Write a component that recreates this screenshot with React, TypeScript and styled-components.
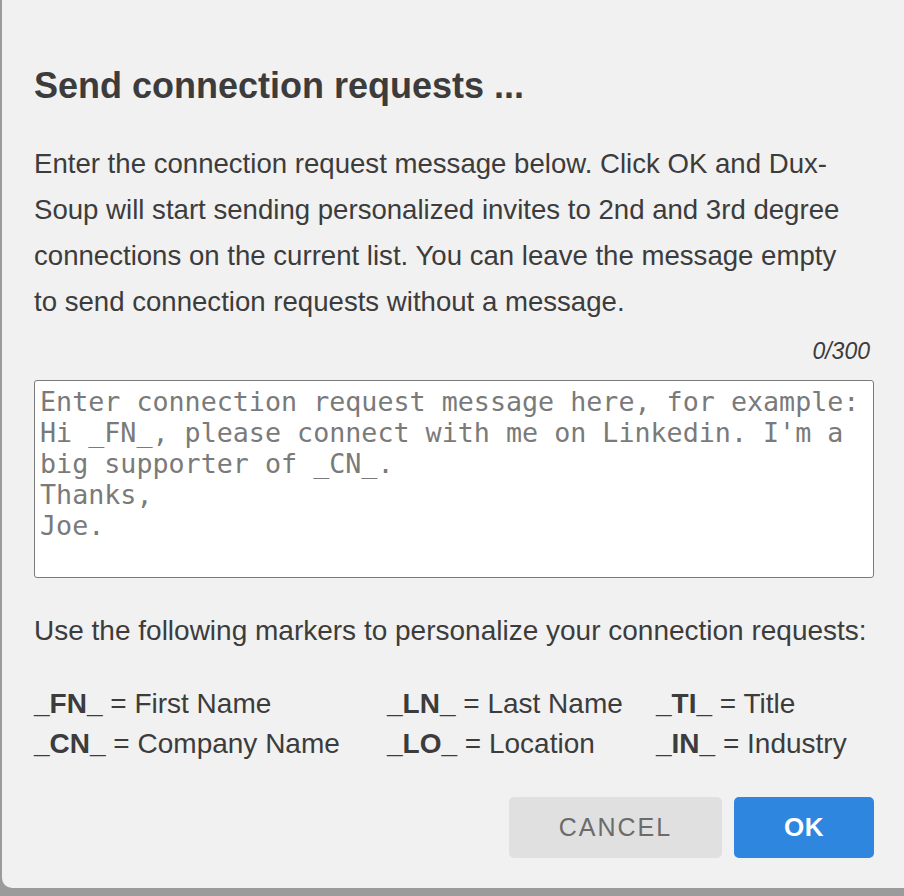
import { useState } from "react";
import styled, { createGlobalStyle } from "styled-components";

const GlobalStyle = createGlobalStyle`
  html, body {
    margin: 0;
    padding: 0;
    background: #9b9b9b;
    overflow: hidden;
  }
  body {
    font-family: "Liberation Sans", Arial, sans-serif;
  }
`;

const Backdrop = styled.div`
  width: 904px;
  height: 896px;
  padding-left: 2px;
  box-sizing: border-box;
`;

const Dialog = styled.div`
  width: 920px;
  height: 888px;
  box-sizing: border-box;
  background: #f1f1f1;
  border-radius: 0 0 10px 10px;
  padding: 66px 48px 0 32px;
  color: #3c3c3c;
`;

const Title = styled.h1`
  margin: 0;
  font-size: 36px;
  line-height: 40px;
  font-weight: 700;
`;

const Intro = styled.p`
  margin: 35px 0 0;
  width: 820px;
  font-size: 27.6px;
  line-height: 46px;
`;

const Counter = styled.div`
  margin-top: 12px;
  width: 836px;
  text-align: right;
  font-size: 23px;
  line-height: 28px;
  font-style: italic;
`;

const MessageBox = styled.textarea`
  display: block;
  margin-top: 15px;
  width: 840px;
  height: 198px;
  box-sizing: border-box;
  padding: 5px 5px;
  border: 1.5px solid #7a7a7a;
  border-radius: 3px;
  background: #fff;
  resize: none;
  font-family: "DejaVu Sans Mono", "Liberation Mono", monospace;
  font-size: 26.7px;
  line-height: 31px;
  color: #3c3c3c;
  outline: none;

  &::placeholder {
    color: #7a7a7a;
    opacity: 1;
  }
`;

const Hint = styled.p`
  margin: 37px 0 0;
  font-size: 28px;
  line-height: 32px;
  white-space: nowrap;
`;

const Markers = styled.div`
  margin-top: 37px;
  display: grid;
  grid-template-columns: 353px 269px auto;
  font-size: 28px;
  line-height: 40px;
`;

const Marker = styled.div`
  white-space: nowrap;
  b {
    font-weight: 700;
  }
`;

const Actions = styled.div`
  margin-top: 33px;
  width: 840px;
  display: flex;
  justify-content: flex-end;
  gap: 12px;
`;

const Button = styled.button<{ $primary?: boolean }>`
  height: 61px;
  width: ${(p) => (p.$primary ? "140px" : "213px")};
  border: none;
  border-radius: 5px;
  font-family: "Liberation Sans", Arial, sans-serif;
  font-size: ${(p) => (p.$primary ? "26px" : "25px")};
  letter-spacing: ${(p) => (p.$primary ? "0.5px" : "2px")};
  font-weight: ${(p) => (p.$primary ? 700 : 400)};
  background: ${(p) => (p.$primary ? "#2f86df" : "#e0e0e0")};
  color: ${(p) => (p.$primary ? "#ffffff" : "#6b6b6b")};
  cursor: pointer;
`;

const markers = [
  ["_FN_", "First Name"],
  ["_LN_", "Last Name"],
  ["_TI_", "Title"],
  ["_CN_", "Company Name"],
  ["_LO_", "Location"],
  ["_IN_", "Industry"],
];

const placeholder =
  "Enter connection request message here, for example:\nHi _FN_, please connect with me on Linkedin. I'm a big supporter of _CN_.\nThanks,\nJoe.";

const App = () => {
  const [message, setMessage] = useState("");

  return (
    <>
      <GlobalStyle />
      <Backdrop>
        <Dialog>
          <Title>Send connection requests ...</Title>
          <Intro>
            Enter the connection request message below. Click OK and Dux-Soup
            will start sending personalized invites to 2nd and 3rd degree
            connections on the current list. You can leave the message empty
            to send connection requests without a message.
          </Intro>

          <Counter>{message.length}/300</Counter>
          <MessageBox
            value={message}
            maxLength={300}
            placeholder={placeholder}
            onChange={(e) => setMessage(e.target.value)}
          />

          <Hint>Use the following markers to personalize your connection requests:</Hint>

          <Markers>
            {markers.map(([code, label]) => (
              <Marker key={code}>
                <b>{code}</b> = {label}
              </Marker>
            ))}
          </Markers>

          <Actions>
            <Button>CANCEL</Button>
            <Button $primary>OK</Button>
          </Actions>
        </Dialog>
      </Backdrop>
    </>
  );
};

export default App;
